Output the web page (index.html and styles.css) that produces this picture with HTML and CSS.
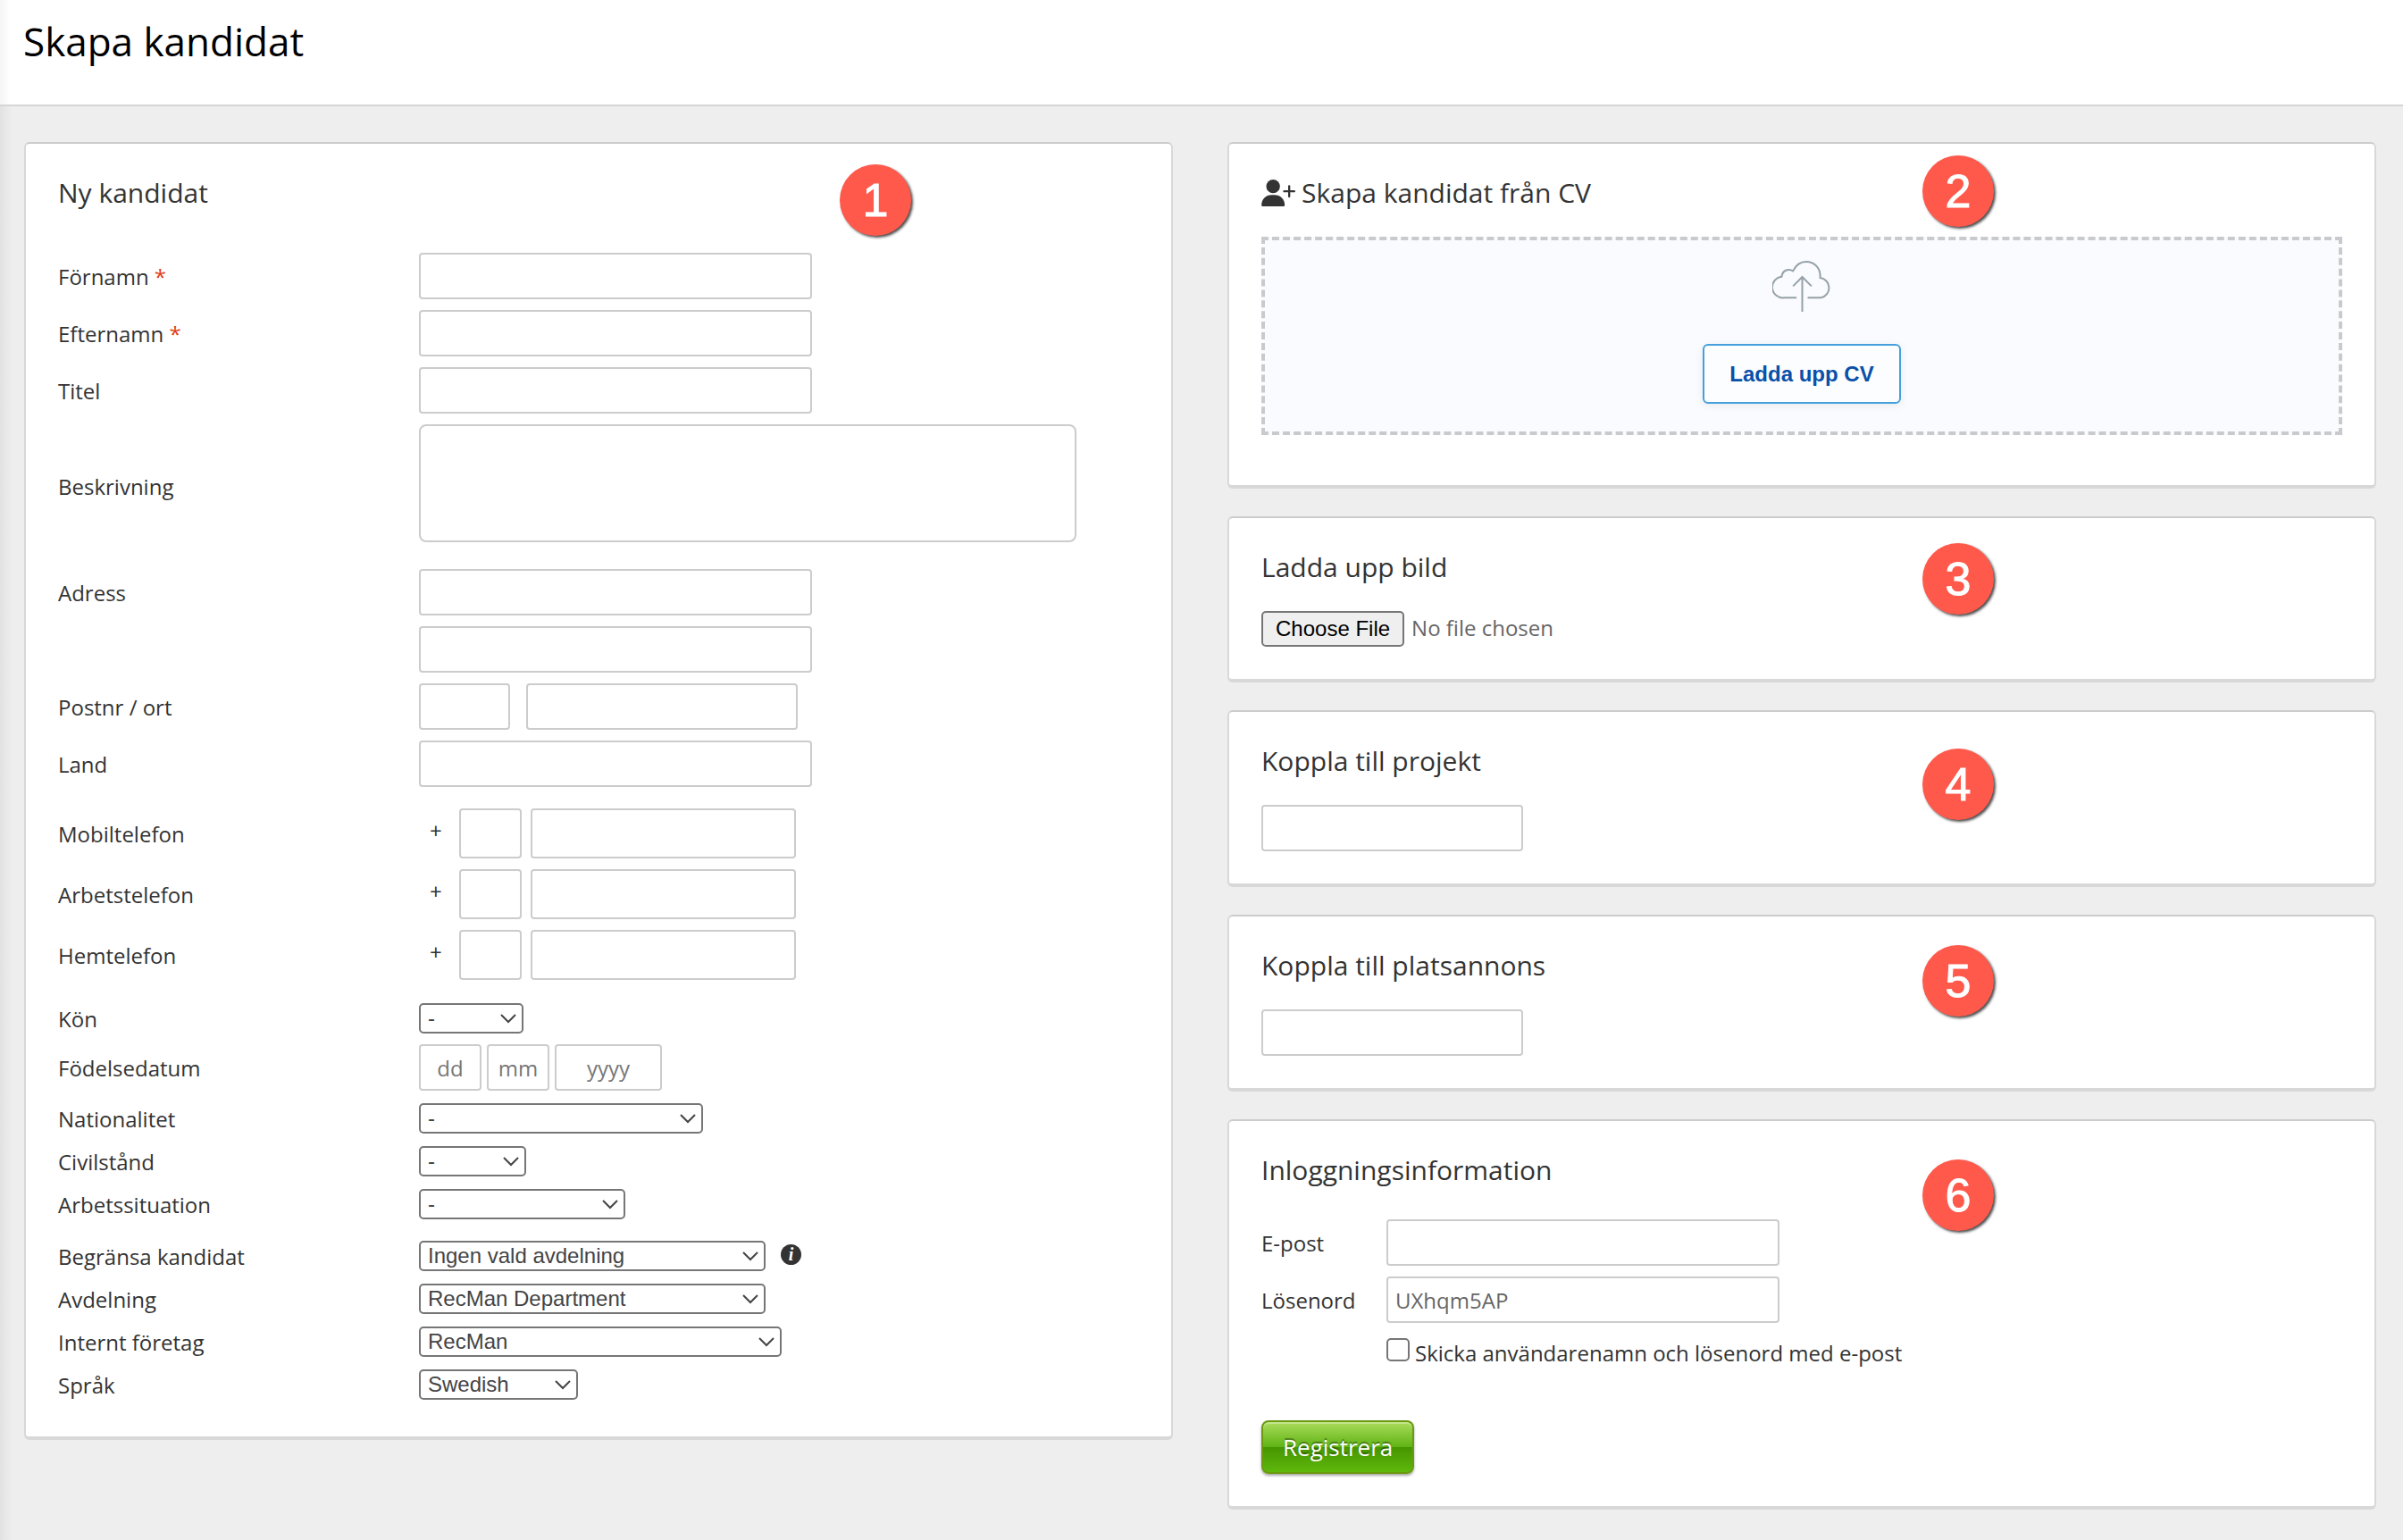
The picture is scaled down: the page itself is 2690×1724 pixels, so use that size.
FILE: index.html
```html
<!DOCTYPE html>
<html lang="sv">
    <head>
        <meta charset="UTF-8" />
        <meta name="viewport" content="width=device-width, initial-scale=1.0" />
        <title>Skapa kandidat</title>
        <link rel="stylesheet" href="styles.css">
    </head>
    <body>
        <header class="page-header">
            <h1>Skapa kandidat</h1>
        </header>
        <main class="columns">
            <form class="card candidate">
                <span class="badge badge-1">1</span>
                <h2>Ny kandidat</h2>
                <div class="row">
                    <label for="firstName">Förnamn <span class="required">*</span></label>
                    <input type="text" id="firstName" class="wide" required />
                </div>
                <div class="row">
                    <label for="lastName">Efternamn <span class="required">*</span></label>
                    <input type="text" id="lastName" class="wide" required />
                </div>
                <div class="row">
                    <label for="jobTitle">Titel</label>
                    <input type="text" id="jobTitle" class="wide" />
                </div>
                <div class="row row-description">
                    <label for="description">Beskrivning</label>
                    <textarea id="description"></textarea>
                </div>
                <div class="row">
                    <label for="address1">Adress</label>
                    <input type="text" id="address1" class="wide" />
                </div>
                <div class="row">
                    <span></span>
                    <input type="text" id="address2" class="wide" aria-label="Adress 2" />
                </div>
                <div class="row">
                    <label for="postalCode">Postnr / ort</label>
                    <div class="postal">
                        <input type="text" id="postalCode" class="postal-code" />
                        <input type="text" class="postal-place" aria-label="Ort" />
                    </div>
                </div>
                <div class="row">
                    <label for="country">Land</label>
                    <input type="text" id="country" class="wide" />
                </div>

                <div class="row row-group">
                    <label for="mobile">Mobiltelefon</label>
                    <div class="phone">
                        <span class="plus">+</span>
                        <input type="text" class="phone-code" aria-label="Landskod mobiltelefon" />
                        <input type="text" id="mobile" class="phone-number" />
                    </div>
                </div>
                <div class="row">
                    <label for="workPhone">Arbetstelefon</label>
                    <div class="phone">
                        <span class="plus">+</span>
                        <input type="text" class="phone-code" aria-label="Landskod arbetstelefon" />
                        <input type="text" id="workPhone" class="phone-number" />
                    </div>
                </div>
                <div class="row row-last-phone">
                    <label for="homePhone">Hemtelefon</label>
                    <div class="phone">
                        <span class="plus">+</span>
                        <input type="text" class="phone-code" aria-label="Landskod hemtelefon" />
                        <input type="text" id="homePhone" class="phone-number" />
                    </div>
                </div>

                <div class="row">
                    <label for="gender">Kön</label>
                    <select id="gender" class="select-xs"><option>-</option></select>
                </div>
                <div class="row">
                    <label for="birthDay">Födelsedatum</label>
                    <div class="birth">
                        <input type="text" id="birthDay" class="day" placeholder="dd" />
                        <input type="text" class="month" placeholder="mm" aria-label="Månad" />
                        <input type="text" class="year" placeholder="yyyy" aria-label="År" />
                    </div>
                </div>
                <div class="row row-select">
                    <label for="nationality">Nationalitet</label>
                    <select id="nationality" class="select-lg"><option>-</option></select>
                </div>
                <div class="row row-select">
                    <label for="maritalStatus">Civilstånd</label>
                    <select id="maritalStatus" class="select-sm"><option>-</option></select>
                </div>
                <div class="row row-select">
                    <label for="workSituation">Arbetssituation</label>
                    <select id="workSituation" class="select-md"><option>-</option></select>
                </div>

                <div class="row row-group">
                    <label for="restrict">Begränsa kandidat</label>
                    <div class="restrict">
                        <select id="restrict" class="select-xl"><option>Ingen vald avdelning</option></select>
                        <span class="info">i</span>
                    </div>
                </div>
                <div class="row row-select">
                    <label for="department">Avdelning</label>
                    <select id="department" class="select-xl"><option>RecMan Department</option></select>
                </div>
                <div class="row row-select">
                    <label for="company">Internt företag</label>
                    <select id="company" class="select-xxl"><option>RecMan</option></select>
                </div>
                <div class="row row-select">
                    <label for="language">Språk</label>
                    <select id="language" class="select-lang"><option>Swedish</option></select>
                </div>
            </form>

            <div class="side">
                <section class="card">
                    <span class="badge badge-2">2</span>
                    <h2>
                        <svg class="user-icon" viewBox="36 63 113 90" fill="#333">
                            <circle cx="75" cy="86" r="23" />
                            <path d="M40 153q-4 0-4-4c0-20 15-34 34-34h10c19 0 34 14 34 34q0 4-4 4z" />
                            <path d="M129 85v35M112 102.500h34" stroke="#333" stroke-width="7" stroke-linecap="round" />
                        </svg>
                        Skapa kandidat från CV
                    </h2>
                    <div class="dropzone">
                        <svg class="cloud-icon" viewBox="192 426 198 171" fill="none" stroke="#95a2a8" stroke-width="6">
                            <path d="M272 550H230A35 35 0 0 1 222 479C224 459 243 450 260 460C270 440 286 429 304 429C333 429 354 452 351 483A34 34 0 0 1 354 550H309" />
                            <path d="M291 597V480M260 511L291 480L322 511" />
                        </svg>
                        <button type="button" class="upload">Ladda upp CV</button>
                    </div>
                </section>

                <section class="card">
                    <span class="badge badge-3">3</span>
                    <h2>Ladda upp bild</h2>
                    <input type="file" class="file" aria-label="Ladda upp bild" />
                </section>

                <section class="card">
                    <span class="badge badge-4">4</span>
                    <h2>Koppla till projekt</h2>
                    <input type="text" class="narrow" aria-label="Koppla till projekt" />
                </section>

                <section class="card">
                    <span class="badge badge-5">5</span>
                    <h2>Koppla till platsannons</h2>
                    <input type="text" class="narrow" aria-label="Koppla till platsannons" />
                </section>

                <form class="card login">
                    <span class="badge badge-6">6</span>
                    <h2>Inloggningsinformation</h2>
                    <div class="row">
                        <label for="email">E-post</label>
                        <input type="email" id="email" class="wide" />
                    </div>
                    <div class="row">
                        <label for="password">Lösenord</label>
                        <input type="text" id="password" class="wide" value="UXhqm5AP" />
                    </div>
                    <div class="send">
                        <input type="checkbox" id="sendLogin" />
                        <label for="sendLogin">Skicka användarenamn och lösenord med e-post</label>
                    </div>
                    <button type="submit" class="register">Registrera</button>
                </form>
            </div>
        </main>
    </body>
</html>
```
FILE: styles.css
```css
* {
    box-sizing: border-box;
}
body {
    margin: 0;
    font-family: "Open Sans", sans-serif;
    font-size: 24px;
    line-height: 34px;
    color: #333;
    background: linear-gradient(to right, rgba(0, 0, 0, 0.05), transparent 14px) #eee;
}
.page-header {
    padding: 16px 26px 41px;
    background: linear-gradient(to right, rgba(0, 0, 0, 0.04), transparent 12px) #fff;
    border-bottom: 2px solid #d5d5d5;
}
h1 {
    margin: 0;
    font-size: 44px;
    font-weight: normal;
    line-height: 60px;
    color: #000;
}
.columns {
    display: grid;
    grid-template-columns: 1fr 1fr;
    align-items: start;
    gap: 61px;
    padding: 40px 30px 34px 27px;
}
.side {
    display: flex;
    flex-direction: column;
    gap: 31px;
}
.card {
    position: relative;
    padding: 35px 36px 36px;
    background: #fff;
    border: 2px solid #d8d8d8;
    border-top-color: #ccc;
    border-bottom-width: 4px;
    border-radius: 6px;
}
h2 {
    display: flex;
    align-items: center;
    gap: 7px;
    margin: 0 0 29px;
    font-size: 30px;
    font-weight: normal;
    line-height: 40px;
}
.candidate {
    padding-bottom: 41px;
}
.candidate h2 {
    margin-bottom: 47px;
}

/* numbered markers */
.badge {
    position: absolute;
    left: 776px;
    width: 80px;
    height: 80px;
    border-radius: 50%;
    background: #ff594c;
    box-shadow: 2px 2px 3px rgba(0, 0, 0, 0.7);
    color: #fff;
    font-family: "Liberation Sans", Arial, sans-serif;
    font-size: 52px;
    line-height: 80px;
    text-align: center;
    -webkit-text-stroke: 1px #fff;
}
.badge-1 {
    left: 911px;
    top: 23px;
}
.badge-2 { top: 13px; }
.badge-3 { top: 28px; }
.badge-4 { top: 41px; }
.badge-5 { top: 32px; }
.badge-6 { top: 43px; }

/* form rows */
.row {
    display: grid;
    grid-template-columns: 404px 1fr;
    align-items: center;
    justify-items: start;
    margin-bottom: 12px;
}
.row label {
    padding-top: 2px;
    line-height: 30px;
}
.row-description {
    margin-bottom: 30px;
}
.row-description label {
    padding-top: 8px;
}
.row-last-phone {
    margin-bottom: 26px;
}
.row-select {
    margin-top: 14px;
    margin-bottom: 0;
}
.row-group {
    margin-top: 24px;
}
.row-select + .row-group {
    margin-bottom: 0;
}
.required {
    color: #e03c14;
}
input, textarea {
    height: 52px;
    padding: 0 8px;
    border: 2px solid #ccc;
    border-radius: 4px;
    background: #fff;
    color: #666;
    font-family: inherit;
    font-size: 24px;
}
textarea {
    display: block;
    width: 736px;
    height: 132px;
    border-radius: 8px;
    resize: none;
}
.wide {
    width: 440px;
}
.narrow {
    display: block;
    width: 293px;
}
.postal, .phone, .birth, .restrict {
    display: flex;
    align-items: center;
}
.postal {
    gap: 18px;
}
.postal-code {
    width: 102px;
}
.postal-place {
    width: 304px;
}
.plus {
    width: 45px;
    padding: 0 0 6px 12px;
}
.phone input {
    height: 56px;
}
.phone-code {
    width: 70px;
    margin-right: 10px;
}
.phone-number {
    width: 297px;
}
.birth {
    gap: 6px;
}
.birth input {
    padding: 0;
    text-align: center;
}
.birth input::placeholder {
    color: #777;
}
.day, .month {
    width: 70px;
}
.year {
    width: 120px;
}
select {
    appearance: none;
    height: 34px;
    padding: 0 34px 0 8px;
    border: 2px solid #767676;
    border-radius: 5px;
    background: url("data:image/svg+xml,%3Csvg xmlns='http://www.w3.org/2000/svg' width='18' height='11' fill='none' stroke='%23444' stroke-width='2'%3E%3Cpath d='M1 1l8 8 8-8'/%3E%3C/svg%3E") no-repeat right 6px center #fff;
    color: #444;
    font-family: "Liberation Sans", Arial, sans-serif;
    font-size: 24px;
    line-height: 28px;
}
.select-xs { width: 117px; }
.select-sm { width: 120px; }
.select-md { width: 231px; }
.select-lg { width: 318px; }
.select-xl { width: 388px; }
.select-xxl { width: 406px; }
.select-lang { width: 178px; }
.restrict {
    gap: 17px;
}
.info {
    width: 23px;
    height: 23px;
    margin-bottom: 4px;
    border-radius: 50%;
    background: #333;
    color: #fff;
    font: italic bold 20px/22px "Liberation Serif", serif;
    text-align: center;
}

/* right column */
.user-icon {
    width: 38px;
    height: 30px;
}
.dropzone {
    display: flex;
    flex-direction: column;
    align-items: center;
    gap: 36px;
    margin-bottom: 20px;
    padding: 23px 0 31px;
    border: 4px dashed #c9cace;
    background: #fafbff;
}
.cloud-icon {
    width: 67px;
    height: 57px;
}
.upload {
    height: 67px;
    padding: 0 28px;
    border: 2px solid #46a0dd;
    border-radius: 6px;
    background: #fcfdff;
    box-shadow: 0 2px 10px rgba(0, 0, 0, 0.07);
    color: #0950a8;
    font: bold 24px "Liberation Sans", Arial, sans-serif;
}
.file {
    display: block;
    height: 40px;
    padding: 0;
    border: 0;
}
.file::file-selector-button {
    height: 40px;
    margin-right: 8px;
    padding: 0 14px;
    border: 2px solid #767676;
    border-radius: 5px;
    background: #efefef;
    color: #000;
    font: 24px "Liberation Sans", Arial, sans-serif;
}
.login h2 {
    margin-bottom: 35px;
}
.login .row {
    grid-template-columns: 140px 1fr;
}
.send {
    display: flex;
    align-items: flex-start;
    gap: 6px;
    margin: 17px 0 58px 140px;
}
.send input {
    appearance: none;
    width: 26px;
    height: 26px;
    margin: 0;
    padding: 0;
    border-color: #767676;
    border-radius: 5px;
}
.send input:checked {
    background: #767676;
}
.register {
    display: block;
    height: 60px;
    padding: 0 22px;
    border: 2px solid #6b9a10;
    border-radius: 8px;
    background: linear-gradient(#abdb5c, #5fb414 50%, #469500 50%, #5fb80c);
    box-shadow: 0 2px 3px rgba(0, 0, 0, 0.35), inset 0 2px 0 rgba(255, 255, 255, 0.3);
    color: #fff;
    font-family: inherit;
    font-size: 26px;
    text-shadow: 0 -2px 1px rgba(0, 0, 0, 0.35);
}
```
